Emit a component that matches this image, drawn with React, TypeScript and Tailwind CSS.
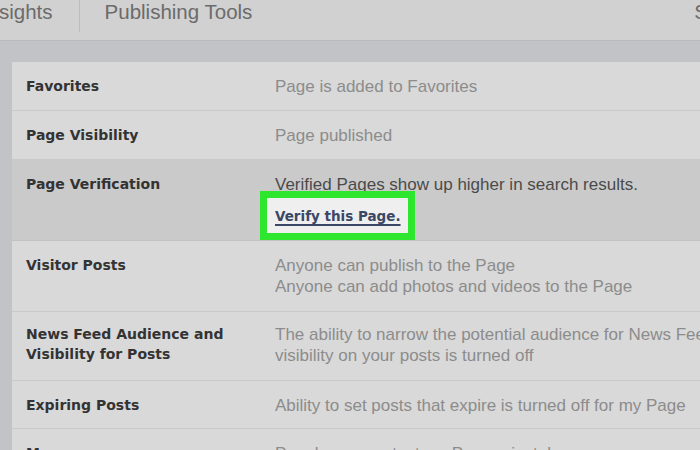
const rows = [
  { label: "Favorites", lines: ["Page is added to Favorites"], h: "h-[49px]", pt: "pt-[14px]" },
  { label: "Page Visibility", lines: ["Page published"], h: "h-[49px]", pt: "pt-[14px]" },
];

const rowsAfter = [
  {
    label: ["Visitor Posts"],
    lines: ["Anyone can publish to the Page", "Anyone can add photos and videos to the Page"],
    h: "h-[71px]",
    pt: "pt-[14px]",
  },
  {
    label: ["News Feed Audience and", "Visibility for Posts"],
    lines: [
      "The ability to narrow the potential audience for News Feed and limit the",
      "visibility on your posts is turned off",
    ],
    h: "h-[69px]",
    pt: "pt-[12px]",
  },
  {
    label: ["Expiring Posts"],
    lines: ["Ability to set posts that expire is turned off for my Page"],
    h: "h-[48px]",
    pt: "pt-[14px]",
  },
  {
    label: ["Messages"],
    lines: ["People can contact my Page privately."],
    h: "h-[48px]",
    pt: "pt-[14px]",
  },
];

const labelCls = "font-['DejaVu_Sans',sans-serif] text-[14px] leading-[20px] font-bold text-[#333333]";
const descCls = "font-['Liberation_Sans',Arial,sans-serif] text-[17px] leading-[21px] text-[#8c8c8c] whitespace-nowrap";

export default function App() {
  return (
    <div className="h-[450px] w-[700px] overflow-hidden bg-[#c2c3c6]">
      {/* tabs */}
      <div className="flex h-[41px] items-start border-b border-[#b9babd] bg-[#d1d1d1] font-['Liberation_Sans',Arial,sans-serif] text-[20.5px] text-[#6b6b6b]">
        <div className="-ml-[1px] leading-[24px]">sights</div>
        <div className="ml-[26px] h-[32px] w-px bg-[#bdbdbd]" />
        <div className="ml-[25px] leading-[24px]">Publishing Tools</div>
        <div className="ml-auto -mr-[8px] leading-[24px]">S</div>
      </div>

      <div className="pl-[12px] pt-[21px]">
        <div className="bg-[#d9d9d9]">
          {rows.map((r) => (
            <div key={r.label} className={`grid grid-cols-[263px_1fr] border-b border-[#c9c9c9] ${r.h} ${r.pt}`}>
              <div className={`pl-[14px] ${labelCls}`}>{r.label}</div>
              <div className={descCls}>{r.lines[0]}</div>
            </div>
          ))}

          <div className="grid h-[81px] grid-cols-[263px_1fr] border-b border-[#c2c2c2] bg-[#cacaca] pt-[14px]">
            <div className={`pl-[14px] ${labelCls}`}>Page Verification</div>
            <div className="flex flex-col items-start">
              <div className="whitespace-nowrap font-['Liberation_Sans',Arial,sans-serif] text-[17px] leading-[21px] text-[#4a4a4a]">
                Verified Pages show up higher in search results.
              </div>
              <div className="-ml-[15px] -mt-[4px] border-[7px] border-[#2fe62f] bg-[#efefef] py-[5px] pl-[8px] pr-[7px]">
                <a className="font-['DejaVu_Sans',sans-serif] text-[13.5px] leading-[24px] font-bold text-[#3b4766] underline decoration-[1.5px] underline-offset-[3px]">
                  Verify this Page.
                </a>
              </div>
            </div>
          </div>

          {rowsAfter.map((r) => (
            <div key={r.label[0]} className={`grid grid-cols-[263px_1fr] border-b border-[#c9c9c9] ${r.h} ${r.pt}`}>
              <div className={`pl-[14px] ${labelCls}`}>
                {r.label.map((l) => (
                  <div key={l}>{l}</div>
                ))}
              </div>
              <div className="overflow-hidden">
                {r.lines.map((l) => (
                  <div key={l} className={descCls}>
                    {l}
                  </div>
                ))}
              </div>
            </div>
          ))}
        </div>
      </div>
    </div>
  );
}
